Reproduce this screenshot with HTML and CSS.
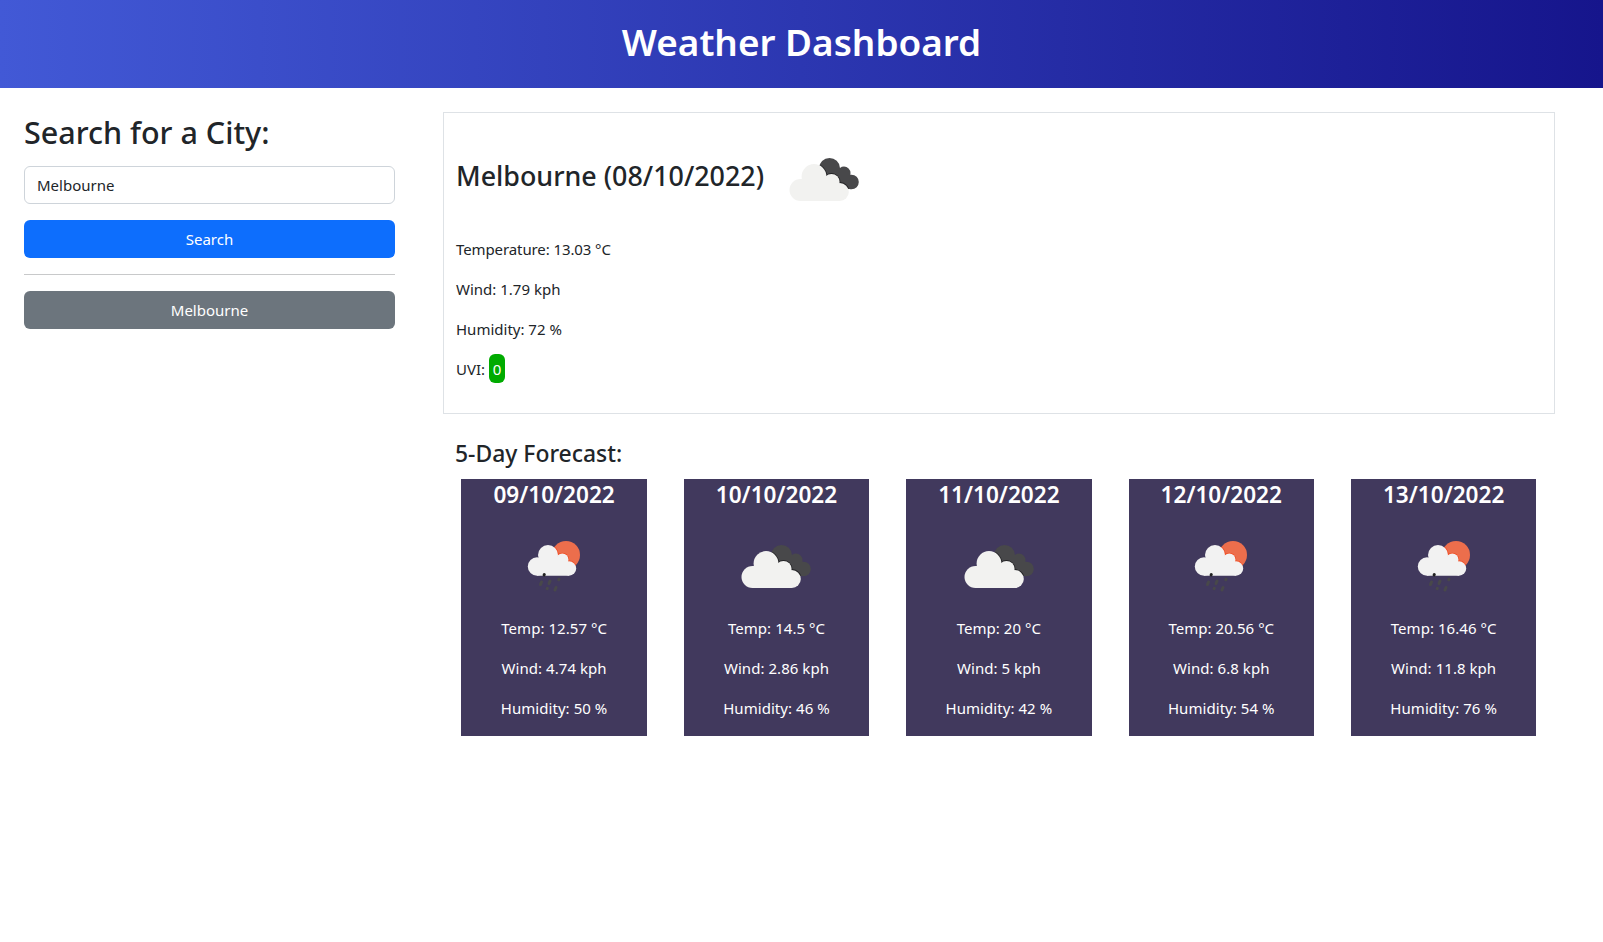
FILE: index.html
```html
<!DOCTYPE html>
<html lang="en">
<head>
<meta charset="utf-8">
<title>Weather Dashboard</title>
<link rel="stylesheet" href="styles.css">
</head>
<body>
<svg class="defs" width="0" height="0" aria-hidden="true">
  <clipPath id="back-cloud"><circle cx="55.500" cy="39.500" r="10.500"/><circle cx="70" cy="44" r="6.500"/><circle cx="77.500" cy="53" r="7.300"/><path d="M50 42l20-2 8 8v12H66L50 52z"/></clipPath>
  <clipPath id="sun"><circle cx="62" cy="39" r="14"/></clipPath>
  <symbol id="clouds" viewBox="0 0 100 100">
    <g clip-path="url(#back-cloud)">
      <path fill="#48484a" d="M0 0h100v100H0z"/>
      <g fill="#222224"><circle cx="40" cy="47.500" r="13.200"/><circle cx="57.500" cy="53" r="8.900"/><circle cx="65.800" cy="63" r="9.900"/></g>
    </g>
    <g fill="#f2f2f0"><circle cx="26.500" cy="61" r="11"/><circle cx="40" cy="47.500" r="12.400"/><circle cx="57.500" cy="53" r="8.100"/><circle cx="65.800" cy="63" r="9"/><path d="M26.500 50H58l7.800 8v14H26.500z"/></g>
  </symbol>
  <symbol id="rain" viewBox="0 0 100 100">
    <g clip-path="url(#sun)">
      <path fill="#ec6e4c" d="M0 0h100v100H0z"/>
      <g fill="#f04a20"><circle cx="44" cy="39" r="10.700"/><circle cx="58.300" cy="43.700" r="6.900"/><circle cx="65" cy="52.500" r="7.900"/></g>
    </g>
    <g fill="#f2f2f2"><circle cx="33" cy="50.500" r="9.200"/><circle cx="44" cy="39" r="10"/><circle cx="58.300" cy="43.700" r="6.200"/><circle cx="65" cy="52.500" r="7.200"/><path d="M33 42h26l6 6v11.700H33z"/></g>
    <g stroke="#48484a" stroke-width="3" stroke-linecap="round"><path d="M37.500 66l-1 2.500M46 65l-1 2.500M55 63.400l-.2.400M43.300 72.300l-.2.400M52 71.500l-1 2.500"/><path stroke="#222" d="M40.300 58.500l-.2.400"/></g>
  </symbol>
</svg>
<header class="masthead"><h1>Weather Dashboard</h1></header>
<main class="layout">
  <aside class="search">
    <h2>Search for a City:</h2>
    <input class="field" type="text" value="Melbourne" aria-label="City">
    <button class="btn primary">Search</button>
    <hr>
    <button class="btn secondary">Melbourne</button>
  </aside>
  <section class="weather">
    <article class="today">
      <h3><span>Melbourne (08/10/2022)</span><svg class="icon"><use href="#clouds"/></svg></h3>
      <p class="long">Temperature: 13.03 °C</p>
      <p>Wind: 1.79 kph</p>
      <p>Humidity: 72 %</p>
      <p>UVI: <span class="uvi">0</span></p>
    </article>
    <h4 class="forecast-title">5-Day Forecast:</h4>
    <div class="forecast">
      <article class="day"><h4>09/10/2022</h4><svg class="icon"><use href="#rain"/></svg><p>Temp: 12.57 °C</p><p>Wind: 4.74 kph</p><p>Humidity: 50 %</p></article>
      <article class="day"><h4>10/10/2022</h4><svg class="icon"><use href="#clouds"/></svg><p>Temp: 14.5 °C</p><p>Wind: 2.86 kph</p><p>Humidity: 46 %</p></article>
      <article class="day"><h4>11/10/2022</h4><svg class="icon"><use href="#clouds"/></svg><p>Temp: 20 °C</p><p>Wind: 5 kph</p><p>Humidity: 42 %</p></article>
      <article class="day"><h4>12/10/2022</h4><svg class="icon"><use href="#rain"/></svg><p>Temp: 20.56 °C</p><p>Wind: 6.8 kph</p><p>Humidity: 54 %</p></article>
      <article class="day"><h4>13/10/2022</h4><svg class="icon"><use href="#rain"/></svg><p>Temp: 16.46 °C</p><p>Wind: 11.8 kph</p><p>Humidity: 76 %</p></article>
    </div>
  </section>
</main>
</body>
</html>
```
FILE: styles.css
```css
*, *::before, *::after { box-sizing: border-box; }
body { margin: 0; background: #fff; color: #212529; font-family: "Noto Sans", "Open Sans", sans-serif; font-size: 15px; line-height: 24px; }
h1, h2, h3, h4, p { margin: 0; }
h1, h2, h3, h4 { font-weight: 500; }
.defs { display: block; position: absolute; }
.masthead { height: 88px; padding-top: 18px; text-align: center; color: #fff; background: linear-gradient(90deg, #4259d6, #16158c); }
.masthead h1 { font-size: 36.9px; font-weight: 600; line-height: 48px; }
.layout { display: flex; gap: 48px; padding: 24px 48px 0 24px; }
.search { width: 371px; display: flex; flex-direction: column; }
.search h2 { padding-top: 1px; margin-bottom: 15px; font-size: 30.5px; line-height: 38px; }
.field, .btn { display: block; width: 100%; height: 38px; padding: 0 12px; border-radius: 6px; font: inherit; }
.field { border: 1px solid #ced4da; color: #212529; background: #fff; }
.btn { border: 0; color: #fff; text-align: center; }
.primary { background: #0d6efd; margin-top: 16px; }
.secondary { background: #6c757d; }
hr { width: 100%; height: 1px; margin: 16px 0; border: 0; border-top: 1px solid #c8c9ca; }
.weather { width: 1112px; }
.today { height: 302px; padding: 16px 12px; border: 1px solid #dee2e6; }
.today h3 { display: flex; align-items: center; height: 100px; margin-bottom: 8px; font-size: 26.85px; line-height: 34px; }
.today h3 span { padding-bottom: 6px; }
.today h3 .icon { margin-left: 10px; }
.icon { display: block; width: 100px; height: 100px; }
p { margin-bottom: 16px; }
.long { letter-spacing: -0.1px; }
.uvi { display: inline-block; height: 29px; margin: -3px 0 -2px; padding: 0 3.7px; line-height: 30px; vertical-align: top; border-radius: 6px; color: #fff; background: #00ab00; }
.forecast-title { margin: 25px 0 11px 12px; font-size: 22.9px; line-height: 29px; }
.forecast { display: grid; grid-template-columns: repeat(5, 185.4px); column-gap: 37px; padding-left: 18.4px; }
.day { height: 257px; text-align: center; color: #fff; background: #41395d; }
.day h4 { padding-top: 1px; margin-bottom: 7px; font-size: 22.6px; font-weight: 600; line-height: 29px; }
.day .icon { margin: 0 auto; }
.day p { letter-spacing: 0.05px; }
```
